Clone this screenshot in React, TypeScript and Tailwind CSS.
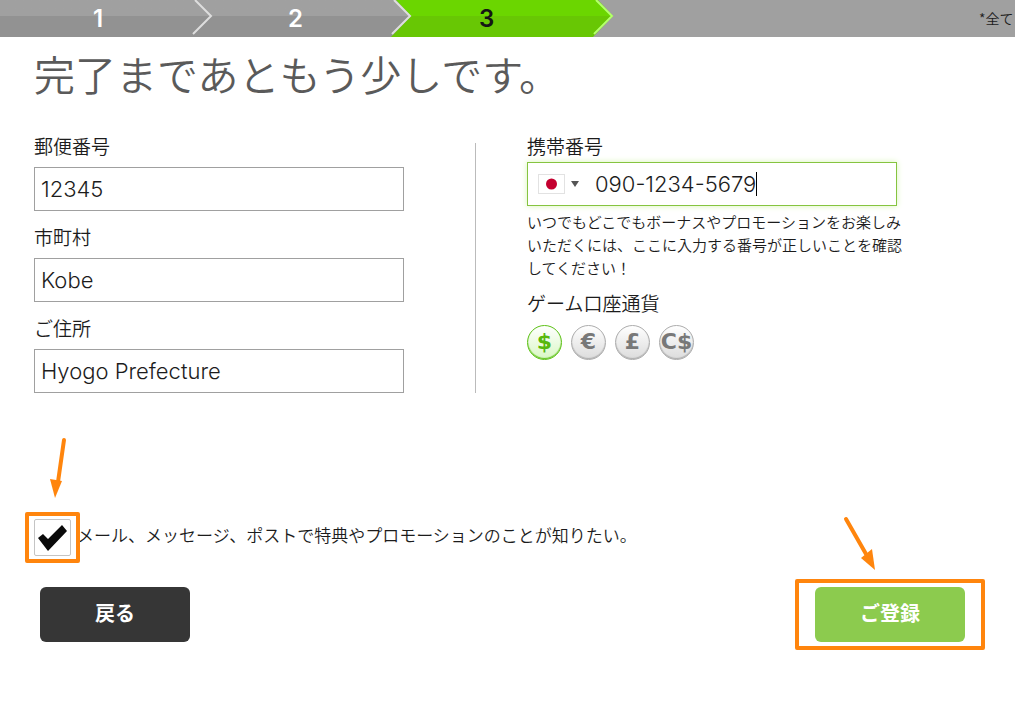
import { useState } from 'react';

const STEPS = [
  { number: 1, box: 'w-[213px] pl-[93px] text-white', tone: 'bg-linear-to-b from-[#a0a0a0] from-43% to-[#929292] to-43%', next: 'gray' },
  { number: 2, box: 'w-[199px] pl-[75px] text-white', tone: 'bg-linear-to-b from-[#a0a0a0] from-43% to-[#929292] to-43%', next: 'green' },
  { number: 3, box: 'w-[202px] pl-[67px] text-[#151515]', tone: 'bg-linear-to-b from-[#6bd600] from-43% to-[#68c704] to-43%', next: 'end' },
];

const ADDRESS_FIELDS = [
  { id: 'postcode', label: '郵便番号', value: '12345' },
  { id: 'city', label: '市町村', value: 'Kobe' },
  { id: 'address', label: 'ご住所', value: 'Hyogo Prefecture' },
];

const CURRENCIES = [
  { id: 'usd', symbol: '$' },
  { id: 'eur', symbol: '€' },
  { id: 'gbp', symbol: '£' },
  { id: 'cad', symbol: 'C$' },
];

// Arrow tip closing a step, the far side takes the colour of the next one
function StepTip({ next }: { next: string }) {
  const top = next === 'green' ? '#6bd600' : '#a0a0a0';
  const bottom = next === 'green' ? '#68c704' : next === 'gray' ? '#929292' : '#a0a0a0';
  return (
    <svg className="h-full w-6 shrink-0" viewBox="0 0 24 37" fill="none">
      <path d="M8 0 H24 V16 H23 Z" fill={top} />
      <path d="M23 16 H24 V37 H3 Z" fill={bottom} />
      <path d="M6 0 L22 16 L4 34" stroke={next === 'end' ? '#b4ff6e' : '#dedede'} strokeWidth="2" />
    </svg>
  );
}

function ProgressBar() {
  return (
    <header className="flex h-[37px] overflow-hidden bg-[#a0a0a0]">
      <ol className="flex shrink-0">
        {STEPS.map((step) => (
          <li
            key={step.number}
            className={`flex items-center justify-between font-['Inter'] text-[24px] leading-none font-semibold ${step.box} ${step.tone}`}
          >
            <span>{step.number}</span>
            <StepTip next={step.next} />
          </li>
        ))}
      </ol>
      <p className="ml-auto w-[36px] shrink-0 overflow-hidden text-[14px] leading-[36px] whitespace-nowrap">*全て</p>
    </header>
  );
}

function AddressField({ id, label, value }: { id: string; label: string; value: string }) {
  return (
    <div className="flex flex-col gap-[9px]">
      <label htmlFor={id} className="text-[19px] leading-6">{label}</label>
      <input
        id={id}
        type="text"
        defaultValue={value}
        className="h-11 w-full border border-[#a0a0a0] px-1.5 font-['Inter'] text-[22px] font-light text-[#1c1c1c] outline-none"
      />
    </div>
  );
}

function PhoneField() {
  return (
    <div className="flex h-11 w-[370px] items-center border border-[#86c440] pl-2.5 shadow-[0_0_6px_#d8f5b8]">
      <button type="button" aria-label="Japan" className="flex items-center gap-1.5">
        <svg className="h-5 w-[27px]" viewBox="0 0 27 20">
          <rect x="0.5" y="0.5" width="26" height="19" fill="#fff" stroke="#e2e2e2" />
          <circle cx="13.5" cy="10" r="5.5" fill="#c4002f" />
        </svg>
        <svg className="h-1.5 w-2" viewBox="0 0 8 6">
          <path d="M0 0 H8 L4 6 Z" fill="#555" />
        </svg>
      </button>
      <input
        id="phone"
        type="tel"
        defaultValue="090-1234-5679"
        className="ml-4 field-sizing-content font-['Inter'] text-[22px] font-light text-[#1c1c1c] outline-none"
      />
      <span className="h-6 w-px bg-black" />
    </div>
  );
}

function Currencies() {
  const [selected, setSelected] = useState('usd');
  return (
    <fieldset className="mt-3">
      <legend className="text-[19px] leading-6">ゲーム口座通貨</legend>
      <div className="mt-2.5 flex gap-[9px]">
        {CURRENCIES.map(({ id, symbol }) => (
          <label
            key={id}
            className={`relative flex size-[35px] cursor-pointer items-center justify-center rounded-full border bg-linear-to-b from-white pb-0.5 font-['DejaVu_Sans'] text-[22px] leading-none font-bold ${
              selected === id
                ? 'border-[#5fc21a] to-[#d9f7c4] text-[#58b80c] shadow-[inset_0_-1px_1px_#5fc21a]'
                : 'border-[#adadad] to-[#dcdcdc] text-[#787878] shadow-[inset_0_-1px_1px_#adadad]'
            }`}
          >
            <input
              type="radio"
              name="currency"
              value={id}
              checked={selected === id}
              onChange={() => setSelected(id)}
              className="absolute inset-0 appearance-none"
            />
            <span>{symbol}</span>
          </label>
        ))}
      </div>
    </fieldset>
  );
}

function Consent() {
  const [checked, setChecked] = useState(true);
  return (
    <div className="mt-[126px] flex items-center">
      <div className="relative size-[37px] shrink-0">
        <input
          id="consent"
          type="checkbox"
          checked={checked}
          onChange={(e) => setChecked(e.target.checked)}
          className="block size-full appearance-none rounded-xs border border-[#c4c4c4]"
        />
        {checked && (
          <svg className="pointer-events-none absolute inset-0 size-full" viewBox="0 0 37 37">
            <path d="M4 19 L9 15 L14 20 L28 6 L33 12 L14 32 Z" fill="#0a0a0a" />
          </svg>
        )}
        {/* Highlight frame and arrow */}
        <span className="pointer-events-none absolute -inset-x-[9px] -inset-y-[7px] rounded-xs border-4 border-[#ff850d]" />
        <svg className="pointer-events-none absolute bottom-full left-4 mb-[21px] h-[64px] w-5" viewBox="0 0 20 64" fill="none">
          <path d="M14 6 L8 48" stroke="#ff850d" strokeWidth="4" strokeLinecap="round" />
          <path d="M0 45 L12 47 L5 64 Z" fill="#ff850d" />
        </svg>
      </div>
      <label htmlFor="consent" className="pb-1.5 pl-1.5 text-[17px] leading-6">
        メール、メッセージ、ポストで特典やプロモーションのことが知りたい。
      </label>
    </div>
  );
}

function Actions() {
  return (
    <div className="mt-[31px] flex justify-between pr-4 pl-1.5">
      <button type="button" className="h-[55px] w-[150px] rounded-md bg-[#363636] pb-1 text-[20px] font-bold text-white">
        戻る
      </button>
      <div className="relative">
        <button type="submit" className="h-[55px] w-[150px] rounded-md bg-[#8ccb4e] pb-1 text-[20px] font-bold text-white">
          ご登録
        </button>
        <span className="pointer-events-none absolute -inset-x-5 -inset-y-2 rounded-xs border-4 border-[#ff850d]" />
        <svg className="pointer-events-none absolute bottom-full left-7 mb-[17px] h-[54px] w-8" viewBox="0 0 32 54" fill="none">
          <path d="M3 3 L23 38" stroke="#ff850d" strokeWidth="4" strokeLinecap="round" />
          <path d="M18 42 L29 33 L32 54 Z" fill="#ff850d" />
        </svg>
      </div>
    </div>
  );
}

export default function App() {
  return (
    <div className="min-h-screen bg-white font-['Noto_Sans_CJK_JP',sans-serif] font-[350] text-[#1c1c1c]">
      <ProgressBar />
      <main className="px-[34px]">
        <h1 className="pt-2 text-[41px] leading-[56px] text-[#5a5a5a]">完了まであともう少しです。</h1>
        <form onSubmit={(e) => e.preventDefault()}>
          <div className="mt-[33px] flex">
            <div className="flex w-[370px] flex-col gap-[14px]">
              {ADDRESS_FIELDS.map((field) => (
                <AddressField key={field.id} {...field} />
              ))}
            </div>
            <div className="mt-[9px] ml-[71px] w-px bg-[#bbb]" />
            <div className="ml-[51px] w-[377px]">
              <label htmlFor="phone" className="mb-1 block text-[19px] leading-6">携帯番号</label>
              <PhoneField />
              <p className="mt-1 text-[15px] leading-[23px]">
                いつでもどこでもボーナスやプロモーションをお楽しみいただくには、ここに入力する番号が正しいことを確認してください！
              </p>
              <Currencies />
            </div>
          </div>
          <Consent />
          <Actions />
        </form>
      </main>
    </div>
  );
}
